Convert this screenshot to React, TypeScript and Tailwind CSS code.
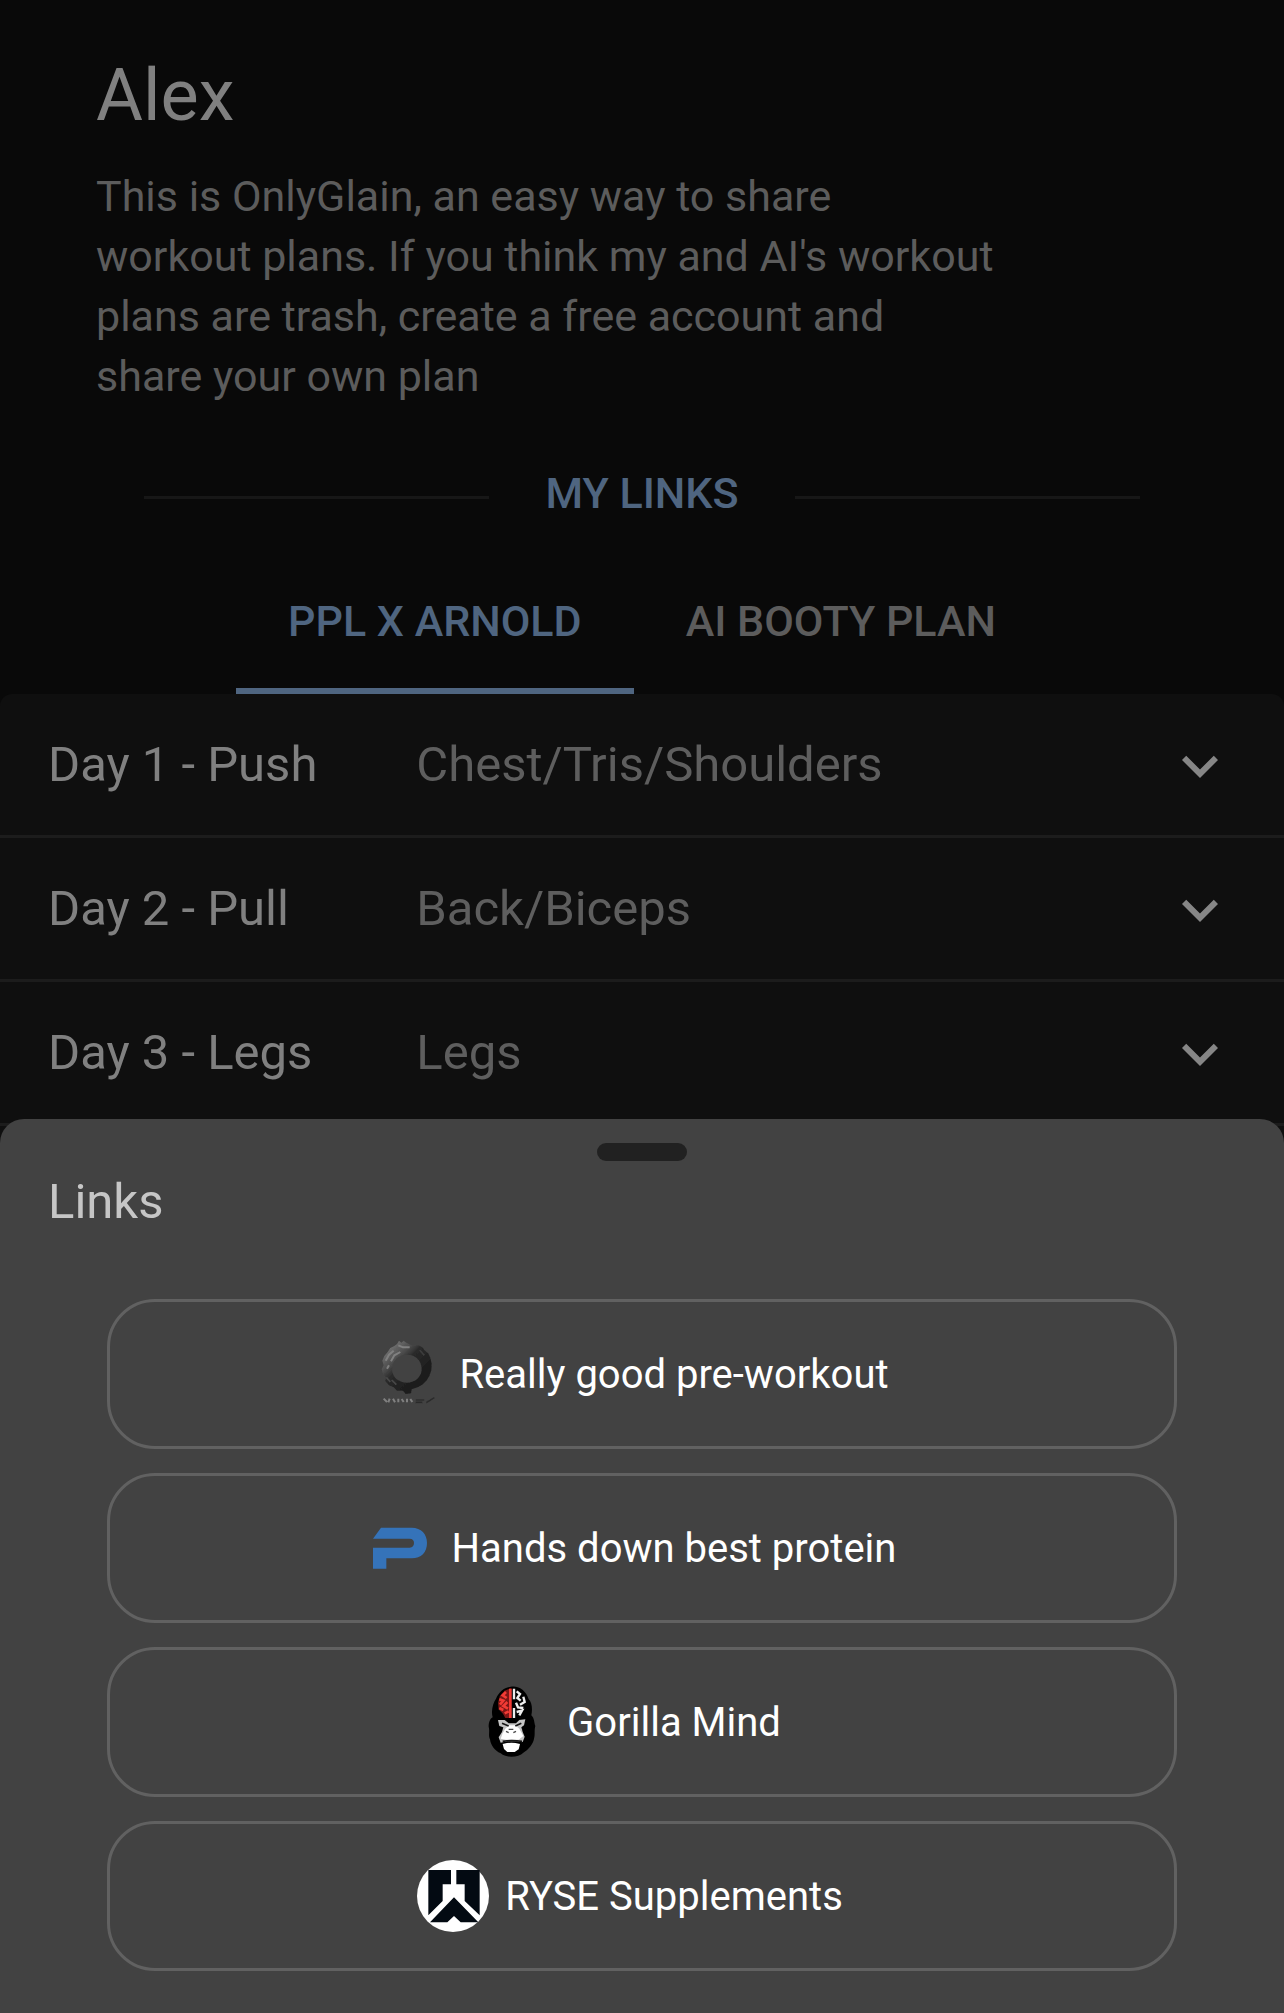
import React from "react";

function RingLogo() {
  return (
    <svg viewBox="30 54 216 216" className="size-[72px] shrink-0" aria-hidden="true">
      <defs>
        <linearGradient id="ring" x1="0.2" y1="0.1" x2="0.75" y2="0.7">
          <stop offset="0" stopColor="#707070" />
          <stop offset="0.3" stopColor="#4c4c4c" />
          <stop offset="0.5" stopColor="#2a2a2a" />
          <stop offset="1" stopColor="#1c1c1c" />
        </linearGradient>
        <filter id="ringSoft">
          <feGaussianBlur stdDeviation="2" />
        </filter>
      </defs>
      <g filter="url(#ringSoft)">
        <path
          fill="url(#ring)"
          fillRule="evenodd"
          d="M108 72 L114 62 L121 68 L128 62 L136 68 L148 74 L160 78 L172 76 L184 82 L192 92 L202 100 L208 114 L212 130 L211 150 L205 168 L196 182 L184 194 L170 202 L152 208 L150 220 L134 222 L126 212 L108 212 L98 202 L84 196 L72 182 L76 174 L66 162 L62 148 L68 136 L64 122 L70 108 L80 96 L88 84 L100 78 Z M138 104 C112 104 93 122 93 147 C93 171 113 188 138 188 C163 188 182 170 182 146 C182 122 163 104 138 104 Z"
        />
        <path d="M74 122 L84 104 L98 92 M90 124 L100 106 L118 96 M112 76 L126 82 L146 82 M84 136 L78 146" stroke="#808080" strokeWidth="6" fill="none" />
        <path d="M76 172 L88 186 M92 180 L106 194" stroke="#484848" strokeWidth="5" fill="none" />
        <path d="M176 90 L190 106" stroke="#3c3c3c" strokeWidth="5" fill="none" />
        <path d="M68 236 L78 246 M86 236 L82 247 M96 236 L102 247 M112 236 V247 M122 237 L128 246 M138 236 V247 M148 237 L154 246" stroke="#808080" strokeWidth="6" fill="none" />
        <path d="M164 240 H190 M196 248 L220 233 M164 247 H184" stroke="#2c2c2c" strokeWidth="5" fill="none" />
      </g>
    </svg>
  );
}

function ProteinLogo() {
  return (
    <svg viewBox="9 36 216 216" className="size-[72px] shrink-0" aria-hidden="true">
      <path
        fill="#3573b9"
        d="M60 83 H152 C181 83 198 102 198 129 C198 157 181 175 152 175 H76 V206 H36 V143 H146 C155 143 159 137 159 129 C159 121 155 116 146 116 H36 Z"
      />
    </svg>
  );
}

function GorillaLogo() {
  return (
    <svg viewBox="33 48 216 216" className="size-[72px] shrink-0" aria-hidden="true">
      <defs>
        <filter id="gorillaSoft">
          <feGaussianBlur stdDeviation="1.7" />
        </filter>
      </defs>
      <g filter="url(#gorillaSoft)">
        <path
          fill="#050505"
          d="M128 50 C154 46 174 62 182 88 C192 96 194 118 190 136 C200 146 198 158 202 168 C198 182 202 194 198 206 C196 222 180 240 166 248 C152 264 112 264 98 250 C80 242 68 226 66 208 C60 196 66 184 62 170 C62 160 64 148 74 142 C68 120 76 98 84 86 C92 66 108 52 128 50 Z"
        />
        <path fill="#7c1715" d="M130 54 V144 H112 L104 130 L92 118 L90 98 L96 78 L110 62 Z" />
        <path
          d="M127 56 V144 M114 66 L104 76 L116 84 M94 88 L106 92 L96 104 M118 96 L106 108 L120 116 M94 114 L106 120 M110 130 L122 124"
          stroke="#f23a34"
          strokeWidth="8"
          fill="none"
        />
        <path
          d="M138 56 V88 M138 114 V144 M146 64 L156 72 L148 84 L158 92 M166 80 L170 96 L156 104 M144 98 L150 112 L166 114 M146 126 L162 122 L154 136"
          stroke="#ededed"
          strokeWidth="7"
          fill="none"
        />
        <path fill="#c4c4c4" d="M90 150 L110 150 L122 160 L144 160 L154 150 L172 148 L168 166 L160 172 L164 186 L170 200 L164 216 L146 214 L118 214 L98 218 L92 202 L102 186 L106 172 L94 168 Z" />
        <path fill="#ffffff" d="M112 176 L124 166 H142 L154 176 L166 198 L152 209 H114 L98 206 L104 190 Z" />
        <path fill="#ffffff" d="M104 222 Q129 214 156 222 L152 238 L140 246 H118 L108 237 Z" />
        <path d="M102 160 L122 168 M160 160 L142 168 M104 214 Q130 209 162 214" stroke="#141414" strokeWidth="5" fill="none" />
        <path d="M114 184 L122 188 M144 184 L136 188 M122 178 H136" stroke="#4c4c4c" strokeWidth="4" fill="none" />
      </g>
    </svg>
  );
}

function RyseLogo() {
  return (
    <svg viewBox="51 45 216 216" className="size-[72px] shrink-0" aria-hidden="true">
      <circle cx="159" cy="153" r="108" fill="#ffffff" />
      <g fill="#030a12">
        <path d="M85 75 H153 V118 H128 V168 L85 211 Z" />
        <path d="M169 75 H239 V211 L194 168 V118 H169 Z" />
        <path d="M162 157 L235 232 H182 L162 213 L142 232 H90 Z" />
      </g>
    </svg>
  );
}

const days = [
  { title: "Day 1 - Push", focus: "Chest/Tris/Shoulders" },
  { title: "Day 2 - Pull", focus: "Back/Biceps" },
  { title: "Day 3 - Legs", focus: "Legs" },
];

const links = [
  { label: "Really good pre-workout", Logo: RingLogo },
  { label: "Hands down best protein", Logo: ProteinLogo },
  { label: "Gorilla Mind", Logo: GorillaLogo },
  { label: "RYSE Supplements", Logo: RyseLogo },
];

export default function App() {
  return (
    <div className="flex min-h-screen flex-col bg-[#090909] font-[Roboto,sans-serif] text-[#808080]">
      <header className="px-24 pt-12">
        <h1 className="text-[72px] leading-[96px]">Alex</h1>
        <p className="mt-[22px] max-w-[900px] text-[43px] leading-[60px] text-[#5c5c5c]">
          This is OnlyGlain, an easy way to share workout plans. If you think my and AI's workout plans are trash,
          create a free account and share your own plan
        </p>
      </header>

      <div className="mx-36 mt-[49px] flex h-[84px] items-center">
        <span className="h-[3px] flex-1 bg-[#171717]" />
        <button type="button" className="px-14 pb-2 text-[43px] font-medium leading-[60px] text-[#4f6580]">
          MY LINKS
        </button>
        <span className="h-[3px] flex-1 bg-[#171717]" />
      </div>

      <div role="tablist" className="mt-[11px] flex h-36 justify-center text-[43px] font-medium leading-[60px]">
        <button type="button" role="tab" aria-selected="true" className="border-b-6 border-[#4f6580] px-[52px] pt-1 text-[#4f6580]">
          PPL X ARNOLD
        </button>
        <button type="button" role="tab" aria-selected="false" className="px-[52px] pb-[2px] text-[#5c5c5c]">
          AI BOOTY PLAN
        </button>
      </div>

      <main className="flex-1 rounded-t-xl bg-[#0f0f0f]">
        {days.map((day) => (
          <button
            key={day.title}
            type="button"
            aria-expanded="false"
            className="flex h-36 w-full items-center border-b-3 border-[#1c1c1c] px-12 text-left text-[49px] leading-[72px]"
          >
            <span className="flex flex-1">
              <span className="w-[33%] shrink-0">{day.title}</span>
              <span className="text-[#5e5e5e]">{day.focus}</span>
            </span>
            <svg viewBox="0 0 24 24" className="mt-[3px] size-[72px] fill-[#868686]" aria-hidden="true">
              <path d="M16.59 8.59 12 13.17 7.41 8.59 6 10l6 6 6-6z" />
            </svg>
          </button>
        ))}
      </main>

      <section aria-labelledby="links-title" className="fixed inset-x-0 bottom-0 rounded-t-3xl bg-[#424242] pt-6 pb-[42px]">
        <div className="mx-auto h-[18px] w-[90px] rounded-[9px] bg-[#212121]" />
        <h2 id="links-title" className="mt-[5px] px-12 text-[49px] leading-[72px] text-[#c6c6c6]">
          Links
        </h2>
        <div className="mx-[107px] mt-[61px] flex flex-col gap-6">
          {links.map(({ label, Logo }) => (
            <a
              key={label}
              href="#"
              className="flex h-[150px] items-center justify-center gap-4 rounded-[48px] border-3 border-[#616161] pr-6 text-[40px] leading-[60px] text-white"
            >
              <Logo />
              <span className="pt-[2px]">{label}</span>
            </a>
          ))}
        </div>
      </section>
    </div>
  );
}
